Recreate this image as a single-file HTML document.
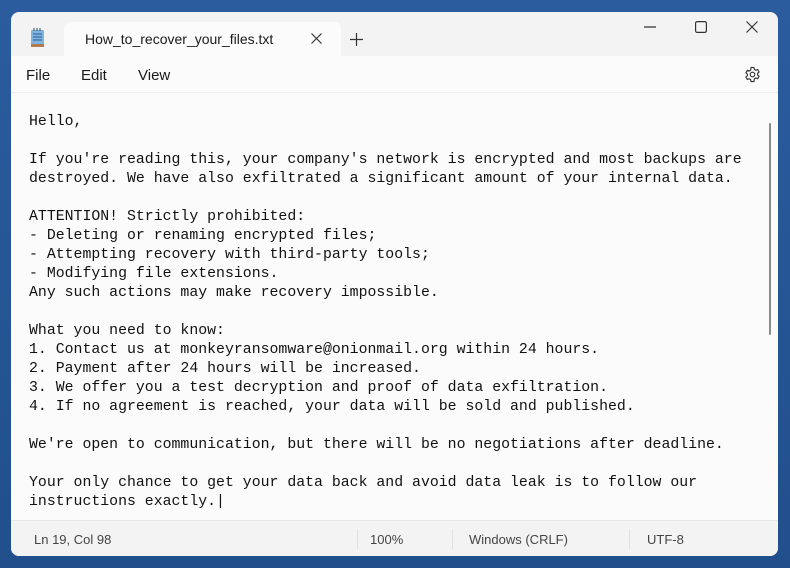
<!DOCTYPE html>
<html><head><style>
body{margin:0;width:790px;height:568px;background:linear-gradient(#2b5c9e,#214f8c);position:relative;overflow:hidden;font-family:"Liberation Sans",sans-serif}
.win{position:absolute;left:11px;top:12px;width:767px;height:544px;background:#f3f3f3;border-radius:8px;overflow:hidden}
.tab{position:absolute;left:53px;top:10px;width:277px;height:34px;background:#fbfbfb;border-radius:7px 7px 0 0}
.tab span{position:absolute;left:21px;top:9px;font-size:14px;color:#1a1a1a}
.menu{position:absolute;left:0;top:44px;width:767px;height:36px;background:#fbfbfb;border-bottom:1px solid #ececec}
.menu span{position:absolute;top:11px;font-size:15px;color:#1a1a1a}
.txt{position:absolute;left:0;top:81px;width:767px;height:427px;background:#fbfbfb}
pre{margin:0;position:absolute;left:18px;top:20px;font-family:"Liberation Mono",monospace;font-size:14.85px;line-height:19px;color:#111}
.status{position:absolute;left:0;top:508px;width:767px;height:36px;background:#f3f3f3;border-top:1px solid #e8e8e8}
.status span{position:absolute;top:11px;font-size:13px;color:#444}
.sep{position:absolute;top:8px;width:1px;height:20px;background:#e0e0e0}
</style></head><body>
<div class="win">
<svg style="position:absolute;left:19px;top:16px" width="16" height="20" viewBox="0 0 16 20"><rect x="1" y="2" width="13" height="16" rx="1" fill="#7fb3e0"/><rect x="1" y="16" width="13" height="3" fill="#b07a4a"/><g stroke="#2d5f8f" stroke-width="1"><line x1="3" y1="6" x2="12" y2="6"/><line x1="3" y1="9" x2="12" y2="9"/><line x1="3" y1="12" x2="12" y2="12"/></g><g stroke="#345" stroke-width="1"><line x1="4" y1="0" x2="4" y2="3"/><line x1="7" y1="0" x2="7" y2="3"/><line x1="10" y1="0" x2="10" y2="3"/></g></svg>
<div class="tab"><span>How_to_recover_your_files.txt</span>
<svg style="position:absolute;left:247px;top:11px" width="11" height="11"><path d="M0.5 0.5L10.5 10.5M10.5 0.5L0.5 10.5" stroke="#333" stroke-width="1.2"/></svg></div>
<svg style="position:absolute;left:339px;top:21px" width="13" height="13"><path d="M6.5 0V13M0 6.5H13" stroke="#333" stroke-width="1.2"/></svg>
<svg style="position:absolute;left:633px;top:14px" width="12" height="2"><path d="M0 1H12" stroke="#333" stroke-width="1.2"/></svg>
<svg style="position:absolute;left:684px;top:9px" width="12" height="12"><rect x="0.6" y="0.6" width="10.8" height="10.8" rx="1.5" fill="none" stroke="#333" stroke-width="1.2"/></svg>
<svg style="position:absolute;left:735px;top:9px" width="12" height="12"><path d="M0.5 0.5L11.5 11.5M11.5 0.5L0.5 11.5" stroke="#333" stroke-width="1.2"/></svg>
<div class="menu"><span style="left:15px">File</span><span style="left:70px">Edit</span><span style="left:127px">View</span>
<svg style="position:absolute;left:733px;top:10px" width="17" height="17" viewBox="0 0 24 24"><path fill="none" stroke="#333" stroke-width="1.6" d="M10 2h4l.6 2.8 2 1.2 2.7-.9 2 3.4-2.1 1.9v2.2l2.1 1.9-2 3.4-2.7-.9-2 1.2L14 22h-4l-.6-2.8-2-1.2-2.7.9-2-3.4 2.1-1.9v-2.2L2.7 9.5l2-3.4 2.7.9 2-1.2z"/><circle cx="12" cy="12" r="3.2" fill="none" stroke="#333" stroke-width="1.6"/></svg></div>
<div class="txt"><pre>Hello,

If you're reading this, your company's network is encrypted and most backups are
destroyed. We have also exfiltrated a significant amount of your internal data.

ATTENTION! Strictly prohibited:
- Deleting or renaming encrypted files;
- Attempting recovery with third-party tools;
- Modifying file extensions.
Any such actions may make recovery impossible.

What you need to know:
1. Contact us at monkeyransomware@onionmail.org within 24 hours.
2. Payment after 24 hours will be increased.
3. We offer you a test decryption and proof of data exfiltration.
4. If no agreement is reached, your data will be sold and published.

We're open to communication, but there will be no negotiations after deadline.

Your only chance to get your data back and avoid data leak is to follow our
instructions exactly.|</pre>
<div style="position:absolute;left:758px;top:30px;width:2px;height:212px;background:#8a8a8a;border-radius:1px"></div></div>
<div class="status"><span style="left:23px">Ln 19, Col 98</span><div class="sep" style="left:346px"></div><span style="left:359px">100%</span><div class="sep" style="left:441px"></div><span style="left:458px">Windows (CRLF)</span><div class="sep" style="left:618px"></div><span style="left:636px">UTF-8</span></div>
</div>
</body></html>
